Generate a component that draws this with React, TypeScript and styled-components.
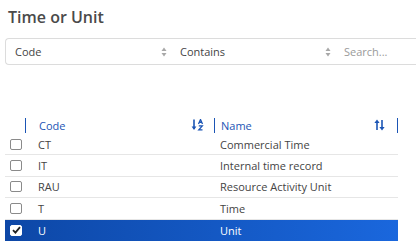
import styled, { createGlobalStyle } from "styled-components";

const Global = createGlobalStyle`
  html, body {
    margin: 0;
    padding: 0;
    background: #fff;
    overflow: hidden;
  }
  body {
    font-family: "Open Sans", "Noto Sans", sans-serif;
  }
  * {
    box-sizing: border-box;
  }
`;

const Page = styled.div`
  width: 416px;
  height: 252px;
  padding: 6px 0 0 5px;
  overflow: hidden;
`;

const Title = styled.h1`
  margin: 0 0 0 3px;
  font-size: 16px;
  font-weight: 600;
  line-height: 22px;
  color: #4a4a4a;
`;

const FilterBar = styled.div`
  margin-top: 10px;
  width: 430px;
  height: 27px;
  display: flex;
  border: 1px solid #dcdcdc;
  border-right: none;
  border-radius: 4px 0 0 4px;
`;

const FilterField = styled.div<{ $w: number; $muted?: boolean }>`
  width: ${(p) => p.$w}px;
  flex: none;
  display: flex;
  align-items: center;
  justify-content: space-between;
  padding: 0 4px 0 9px;
  font-size: 11px;
  color: ${(p) => (p.$muted ? "#9a9a9a" : "#444")};
`;

const Table = styled.div`
  margin-top: 52px;
  width: 393px;
`;

const HeaderRow = styled.div`
  display: flex;
  height: 16px;
  align-items: center;
  margin-bottom: 1px;
`;

const CheckCell = styled.div`
  width: 20px;
  flex: none;
  display: flex;
  align-items: center;
  padding-left: 5px;
`;

const HeadCell = styled.div<{ $w: number; $pad: number; $right: number }>`
  width: ${(p) => p.$w}px;
  flex: none;
  height: 15px;
  border-left: 1px solid #1b55b5;
  display: flex;
  align-items: center;
  justify-content: space-between;
  padding: 0 ${(p) => p.$right}px 0 ${(p) => p.$pad}px;
  font-size: 11px;
  color: #1b55b5;
`;

const EndLine = styled.div`
  width: 0;
  height: 15px;
  border-left: 1px solid #1b55b5;
`;

const Row = styled.div<{ $selected?: boolean }>`
  display: flex;
  align-items: center;
  height: 21.4px;
  border-bottom: 1px solid ${(p) => (p.$selected ? "transparent" : "#e6e6e6")};
  background: ${(p) =>
    p.$selected ? "linear-gradient(90deg, #0d47a6 0%, #1a67dd 100%)" : "transparent"};
  color: ${(p) => (p.$selected ? "#fff" : "#444")};
  font-size: 11px;
  &:last-child {
    border-bottom: none;
  }
`;

const Cell = styled.div<{ $w: number; $pad: number }>`
  width: ${(p) => p.$w}px;
  flex: none;
  padding-left: ${(p) => p.$pad}px;
  white-space: nowrap;
`;

const Box = styled.div<{ $checked?: boolean }>`
  width: 12px;
  height: 11px;
  border: 1px solid ${(p) => (p.$checked ? "#fff" : "#8a8a8a")};
  border-radius: 2px;
  background: #fff;
  display: flex;
  align-items: center;
  justify-content: center;
`;

const Arrows = () => (
  <svg width="6" height="10" viewBox="0 0 6 10">
    <path d="M3 0.5 L5.5 4 H0.5 Z" fill="#a8a8a8" />
    <path d="M3 9.5 L5.5 6 H0.5 Z" fill="#a8a8a8" />
  </svg>
);

const SortAlpha = () => (
  <svg width="13" height="12" viewBox="0 0 13 12">
    <path d="M3 0.5 V10" stroke="#1b55b5" strokeWidth="1.6" />
    <path d="M0.6 7.6 L3 11 L5.4 7.6 Z" fill="#1b55b5" />
    <path d="M7.5 5 L9.5 0.5 L11.5 5 M8.3 3.4 H10.7" stroke="#1b55b5" strokeWidth="1.3" fill="none" />
    <path d="M7.8 6.8 H11.3 L7.8 10.9 H11.5" stroke="#1b55b5" strokeWidth="1.3" fill="none" />
  </svg>
);

const SortBoth = () => (
  <svg width="11" height="12" viewBox="0 0 11 12">
    <path d="M3 11 V2" stroke="#1b55b5" strokeWidth="1.6" />
    <path d="M0.4 4 L3 0.4 L5.6 4 Z" fill="#1b55b5" />
    <path d="M8 1 V10" stroke="#1b55b5" strokeWidth="1.6" />
    <path d="M5.4 8 L8 11.6 L10.6 8 Z" fill="#1b55b5" />
  </svg>
);

const Tick = () => (
  <svg width="9" height="8" viewBox="0 0 9 8">
    <path d="M1 4.2 L3.4 6.6 L8 1.2" stroke="#222" strokeWidth="1.8" fill="none" />
  </svg>
);

const rows = [
  { code: "CT", name: "Commercial Time" },
  { code: "IT", name: "Internal time record" },
  { code: "RAU", name: "Resource Activity Unit" },
  { code: "T", name: "Time" },
  { code: "U", name: "Unit", selected: true },
];

const App = () => {
  return (
    <Page>
      <Global />
      <Title>Time or Unit</Title>
      <FilterBar>
        <FilterField $w={165}>
          Code
          <Arrows />
        </FilterField>
        <FilterField $w={164}>
          Contains
          <Arrows />
        </FilterField>
        <FilterField $w={100} $muted>
          Search...
        </FilterField>
      </FilterBar>
      <Table>
        <HeaderRow>
          <CheckCell />
          <HeadCell $w={189} $pad={13} $right={10}>
            Code
            <SortAlpha />
          </HeadCell>
          <HeadCell $w={183} $pad={6} $right={12}>
            Name
            <SortBoth />
          </HeadCell>
          <EndLine />
        </HeaderRow>
        {rows.map((r) => (
          <Row key={r.code} $selected={r.selected}>
            <CheckCell>
              <Box $checked={r.selected}>{r.selected && <Tick />}</Box>
            </CheckCell>
            <Cell $w={189} $pad={13}>
              {r.code}
            </Cell>
            <Cell $w={183} $pad={6}>
              {r.name}
            </Cell>
          </Row>
        ))}
      </Table>
    </Page>
  );
};

export default App;
